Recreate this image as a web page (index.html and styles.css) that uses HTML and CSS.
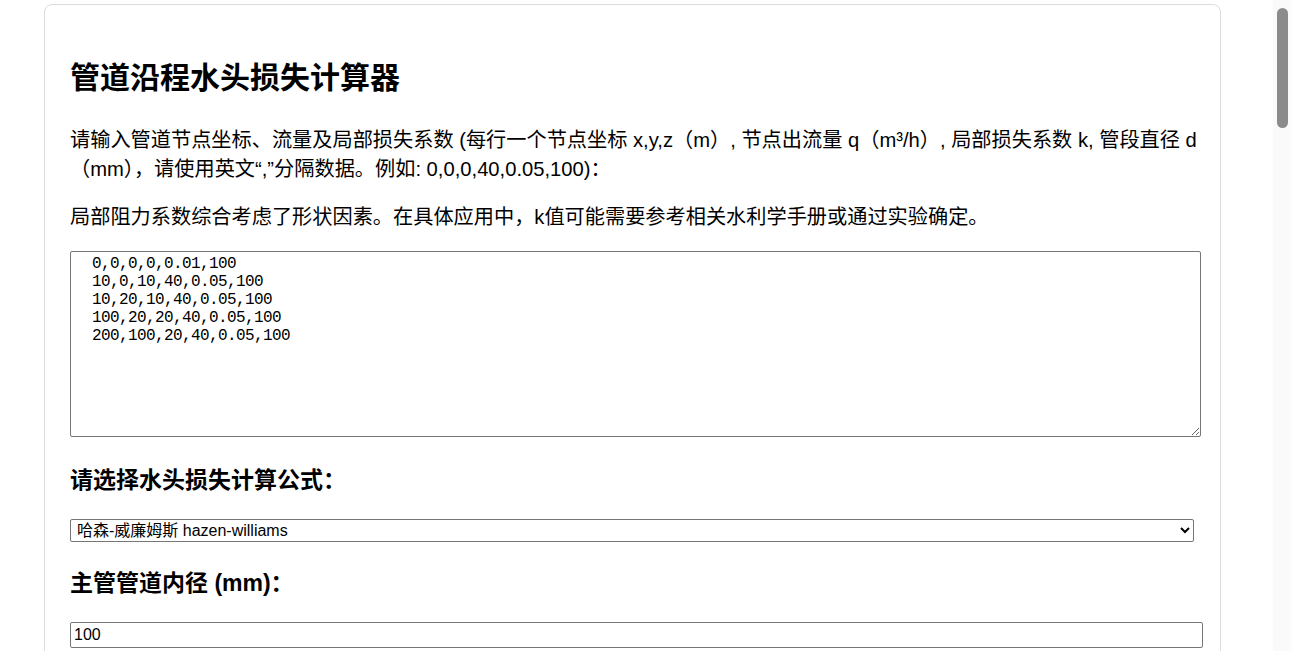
FILE: index.html
```html
<!DOCTYPE html>
<html lang="zh-CN">
  <head>
    <meta charset="UTF-8" />
    <title>管道沿程水头损失计算器</title>
    <meta name="viewport" content="width=device-width, initial-scale=1" />
    <link rel="stylesheet" href="styles.css">
  </head>
  <body>
    <div class="page">
      <div class="container">
        <h1>管道沿程水头损失计算器</h1>
        <p>请输入管道节点坐标、流量及局部损失系数 (每行一个节点坐标 x,y,z（m）, 节点出流量 q（m³/h）, 局部损失系数 k, 管段直径 d（mm），请使用英文“,”分隔数据。例如: 0,0,0,40,0.05,100)：</p>
        <p>局部阻力系数综合考虑了形状因素。在具体应用中，k值可能需要参考相关水利学手册或通过实验确定。</p>
        <textarea id="nodesInput" spellcheck="false">0,0,0,0,0.01,100
10,0,10,40,0.05,100
10,20,10,40,0.05,100
100,20,20,40,0.05,100
200,100,20,40,0.05,100</textarea>

        <h3 class="field-title">请选择水头损失计算公式：</h3>
        <select id="formula">
          <option value="hazen-williams">哈森-威廉姆斯 hazen-williams</option>
          <option value="darcy-weisbach">达西-魏斯巴赫 darcy-weisbach</option>
          <option value="manning">曼宁 manning</option>
        </select>

        <h3 class="field-title field-title-next">主管管道内径 (mm)：</h3>
        <input type="text" id="mainDiameter" value="100" />
      </div>
    </div>
    <!-- page scrollbar -->
    <div class="scrollbar">
      <div class="scrollbar-thumb"></div>
    </div>
  </body>
</html>
```

FILE: styles.css
```css
html,
body {
  margin: 0;
  padding: 0;
  height: 100%;
  overflow: hidden;
  background: #fff;
}
body {
  display: flex;
  font-family: "Liberation Sans", "Noto Sans CJK SC", sans-serif;
  color: #000;
}

.page {
  width: 1273px;
  height: 651px;
  overflow: hidden;
  padding-top: 4px;
  box-sizing: border-box;
}
.scrollbar {
  width: 18px;
  height: 651px;
  box-sizing: border-box;
  padding: 8px 3px 0 4px;
  background: #fafafa;
}
.scrollbar-thumb {
  height: 120px;
  border-radius: 6px;
  background: #8b8b8b;
}

.container {
  width: 1145px;
  margin-left: 44px;
  padding: 25px 5px 40px 25px;
  border: 1px solid #dcdcdc;
  border-radius: 8px;
  background: #fff;
  min-height: 3200px;
}
h1 {
  font-size: 30px;
  line-height: 36px;
  margin: 30px 0 30px;
  font-weight: bold;
}
p {
  font-size: 20.2px;
  line-height: 29px;
  margin: 19px 0;
}
textarea {
  display: block;
  width: 1131px;
  height: 186px;
  box-sizing: border-box;
  margin: 19px 0 0;
  padding: 3px 2px 2px 21px;
  border: 1px solid #767676;
  border-radius: 2px;
  font-family: "Liberation Mono", monospace;
  font-size: 16px;
  letter-spacing: -0.6px;
  line-height: 18px;
  color: #000;
  resize: vertical;
}
.field-title {
  font-size: 23px;
  line-height: 30px;
  margin: 28px 0 24px;
  font-weight: bold;
}
.field-title-next {
  margin-top: 26px;
}
select {
  display: block;
  width: 1124px;
  height: 23px;
  box-sizing: border-box;
  font-family: "Liberation Sans", "Noto Sans CJK SC", sans-serif;
  font-size: 16px;
  border: 1px solid #767676;
  border-radius: 2px;
  background: #fff;
  color: #000;
  padding: 0 2px;
}
input {
  display: block;
  width: 1133px;
  height: 26px;
  box-sizing: border-box;
  font-family: "Liberation Sans", "Noto Sans CJK SC", sans-serif;
  font-size: 16px;
  border: 1px solid #767676;
  border-radius: 2px;
  padding: 1px 3px;
  color: #000;
}
```
